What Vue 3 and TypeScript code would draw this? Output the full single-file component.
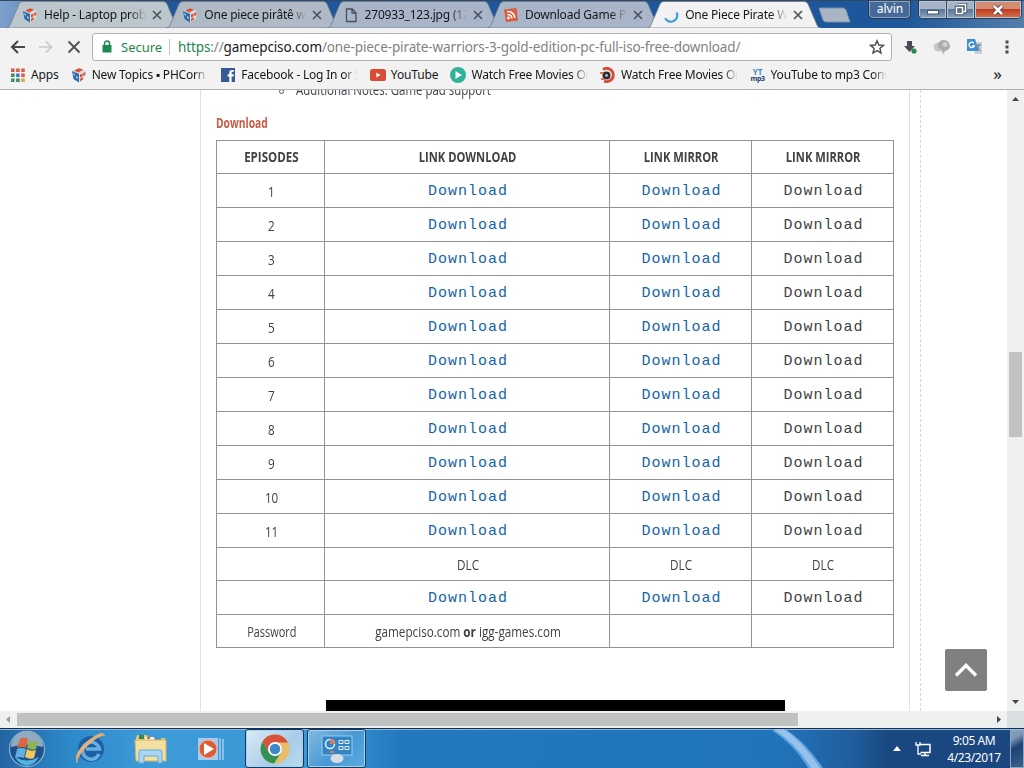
<script setup lang="ts">
interface Tab {
  title: string;
  icon: string;
  tone: string;
  active?: boolean;
}

interface Bookmark {
  label: string;
  icon: string;
  cut?: boolean;
}

interface Row {
  label: string;
  kind: 'link' | 'text' | 'password';
}

const tabs: Tab[] = [
  { title: 'Help - Laptop prob', icon: 'cube', tone: '#bcc6cd' },
  { title: 'One piece pirâtê wa', icon: 'cube', tone: '#b0bac6' },
  { title: '270933_123.jpg (128', icon: 'page', tone: '#a9b5c8' },
  { title: 'Download Game P', icon: 'feed', tone: '#a9b5c8' },
  { title: 'One Piece Pirate W', icon: 'spinner', tone: '#f2f2f2', active: true },
];

const bookmarks: Bookmark[] = [
  { label: 'Apps', icon: 'apps' },
  { label: 'New Topics ▪ PHCorn', icon: 'cube', cut: true },
  { label: 'Facebook - Log In or S', icon: 'facebook', cut: true },
  { label: 'YouTube', icon: 'youtube' },
  { label: 'Watch Free Movies Or', icon: 'play', cut: true },
  { label: 'Watch Free Movies Or', icon: 'reel', cut: true },
  { label: 'YouTube to mp3 Conv', icon: 'ytmp3', cut: true },
];

const rows: Row[] = [
  ...Array.from({ length: 11 }, (_, i): Row => ({ label: String(i + 1), kind: 'link' })),
  { label: '', kind: 'text' },
  { label: '', kind: 'link' },
  { label: 'Password', kind: 'password' },
];
</script>

<template>
  <div class="screen">
    <!-- Shared icon shapes -->
    <svg class="defs" width="0" height="0">
      <symbol id="cube" viewBox="0 0 16 16">
        <path d="M1 4 8 1l7 3-7 3z" fill="#c9d8e4" />
        <path d="M1 4l7 3v8.500l-5.500-3.500z" fill="#2f69a8" />
        <path d="M15 4 8 7v8.500l5.500-3.500z" fill="#d9e4ea" />
        <path d="M3 3.500 8 1.200l4 1.300L7.500 5.500z" fill="#dc4f2a" />
        <path d="M9 7.500l2.500-1v3l-2.500 1zM12.200 6l2.300-1-.3 3-2 1zM9 11.800l3-1.500v2L9 14.500z" fill="#dc4f2a" />
        <path d="M2 6l2 1v2L2.500 8zM5 9l2 1v2l-2-1z" fill="#9cc6e4" />
      </symbol>
      <symbol id="page" viewBox="0 0 16 16">
        <path d="M3.500 2h5.800L13 5.700V14.500H3.500zM9 2v4h4" fill="none" stroke="#4a4f58" stroke-width="1.300" />
      </symbol>
      <symbol id="feed" viewBox="0 0 16 16">
        <path d="M1 2.500 13.500 1 15 13.500 3 15z" fill="#dc5b38" />
        <circle cx="5.500" cy="11" r="1.400" fill="#fff" />
        <path d="M4.500 7.500q4 0 4.500 4M4.200 4.500q7 0 7.600 6.500" fill="none" stroke="#fff" stroke-width="1.500" />
      </symbol>
      <symbol id="spinner" viewBox="0 0 16 16">
        <path d="M13.600 5.500A6.200 6.200 0 0 1 2.200 11.200" fill="none" stroke="#3c9fdc" stroke-width="2.200" />
      </symbol>
      <symbol id="apps" viewBox="0 0 16 16">
        <g fill="none" stroke-width="1.500">
          <path d="M1.800 2.300h2v2h-2zM6.900 2.300h2v2h-2zM12 2.300h2v2h-2z" stroke="#d8553d" />
          <path d="M1.800 7.300h2v2h-2z" stroke="#36875b" />
          <path d="M6.900 7.300h2v2h-2z" stroke="#3a79c0" />
          <path d="M12 7.300h2v2h-2z" stroke="#d8553d" />
          <path d="M1.800 12.300h2v2h-2zM6.900 12.300h2v2h-2z" stroke="#36875b" />
          <path d="M12 12.300h2v2h-2z" stroke="#d3a04e" />
        </g>
      </symbol>
      <symbol id="facebook" viewBox="0 0 16 16">
        <rect x="1" y="1" width="14" height="14" fill="#365a91" />
        <path d="M11.600 15V9.400h2.100V7.200h-2.100V5.800q0-1 1.100-1h1.100V2.900h-1.900Q9.300 2.900 9.300 5.500v1.700H7.600v2.200h1.700V15z" fill="#fff" />
      </symbol>
      <symbol id="youtube" viewBox="0 0 16 16">
        <rect x="0" y="2" width="16" height="12" rx="2.600" fill="#d64c35" />
        <path d="M6.300 5.500v5L10.600 8z" fill="#fff" />
      </symbol>
      <symbol id="play" viewBox="0 0 16 16">
        <circle cx="8" cy="8" r="8" fill="#2fb296" />
        <path d="M5.500 4v8l6.300-4z" fill="#fff" />
      </symbol>
      <symbol id="reel" viewBox="0 0 16 16">
        <path d="M3 2.500A6.600 6.600 0 1 1 4 14" fill="none" stroke="#d64c35" stroke-width="2.800" />
        <circle cx="6.500" cy="8.500" r="4" fill="#2e2c32" />
        <circle cx="6.500" cy="8.500" r="1.400" fill="#b9c0c8" />
        <path d="M0 6h4M1 12h4" stroke="#d64c35" stroke-width="1.500" />
      </symbol>
      <symbol id="close" viewBox="0 0 10 10">
        <path d="M1 1l8 8M9 1 1 9" stroke="#4f545c" stroke-width="1.700" />
      </symbol>
    </svg>

    <header class="tab-strip">
      <div v-for="(tab, i) in tabs" :key="i" class="tab" :class="{ active: tab.active }">
        <svg class="tab-shape" viewBox="0 0 174 28" width="174" height="28">
          <path d="M0 28Q3 28 4 25L13 4Q14 1.500 17 1.500H157Q160 1.500 161 4L170 25Q171 28 174 28Z" :fill="tab.tone" stroke="#6f7c91" stroke-width=".8" />
        </svg>
        <svg class="icon"><use :href="'#' + tab.icon" /></svg>
        <span class="tab-title">{{ tab.title }}</span>
        <svg class="tab-close"><use href="#close" /></svg>
      </div>
      <svg class="new-tab" width="34" height="16" viewBox="0 0 34 16">
        <path d="M1 1h24q2 0 3 2l4 12H8q-2 0-3-2z" fill="#a9b5c4" stroke="#7c91ad" />
      </svg>
      <div class="user-button">alvin</div>
      <div class="window-buttons">
        <span class="win"><svg width="14" height="12" viewBox="0 0 14 12"><rect x="1.500" y="6.500" width="11" height="3.500" fill="#fff" stroke="#46566e" /></svg></span>
        <span class="win"><svg width="14" height="13" viewBox="0 0 14 13"><path d="M4.500 1.500h7v7h-2M2.500 4.500h6v6h-6z" fill="none" stroke="#46566e" stroke-width="3.400" /><path d="M4.500 1.500h7v7h-2M2.500 4.500h6v6h-6z" fill="none" stroke="#fff" stroke-width="1.500" /></svg></span>
        <span class="win win-close"><svg width="14" height="12" viewBox="0 0 14 12"><path d="M3 2l8 8M11 2l-8 8" stroke="#5b3534" stroke-width="4.400" /><path d="M3 2l8 8M11 2l-8 8" stroke="#fff" stroke-width="2.600" /></svg></span>
      </div>
    </header>

    <nav class="toolbar">
      <div class="nav-buttons">
        <svg width="16" height="16" viewBox="0 0 16 16"><path d="M15 8H2.500M8 2 2 8l6 6" fill="none" stroke="#42464d" stroke-width="2" /></svg>
        <svg width="16" height="16" viewBox="0 0 16 16"><path d="M1 8h12.500M8 2.500 13.500 8 8 13.500" fill="none" stroke="#c6c8ca" stroke-width="1.700" /></svg>
        <svg width="16" height="16" viewBox="0 0 16 16"><path d="M2.500 2.500l11 11M13.500 2.500l-11 11" stroke="#4b4e54" stroke-width="1.800" /></svg>
      </div>
      <div class="omnibox">
        <svg class="lock" width="10" height="13" viewBox="0 0 10 13"><path d="M2.500 6V3.500a2.500 2.500 0 0 1 5 0V6" fill="none" stroke="#1f8750" stroke-width="1.500" /><rect x=".5" y="5" width="9" height="7.500" fill="#1f8750" /></svg>
        <span class="secure">Secure</span>
        <span class="divider"></span>
        <span class="url"><span class="https">https</span>://<span class="host">gamepciso.com</span>/one-piece-pirate-warriors-3-gold-edition-pc-full-iso-free-download/</span>
        <svg class="star" width="16" height="16" viewBox="0 0 16 16"><path d="M8 1.700l1.800 4.300 4.600.4-3.500 3 1.100 4.600L8 11.600 4 14l1.100-4.600-3.500-3 4.600-.4z" fill="none" stroke="#484b50" stroke-width="1.400" /></svg>
      </div>
      <div class="extensions">
        <svg width="16" height="16" viewBox="0 0 16 16"><path d="M5 2h5v5h3l-5.500 6L2 7h3z" fill="#484c52" /><circle cx="12" cy="12" r="2.600" fill="#208a4b" /></svg>
        <svg width="18" height="16" viewBox="0 0 18 16"><ellipse cx="6" cy="8" rx="5.500" ry="4.500" fill="#c6c8c8" /><path d="M5 6q1-5 6-5t6 6q0 4-5 5l-2 3.500-1-4.500q-4-1-4-5z" fill="#aaacad" /><circle cx="12" cy="5.500" r="2.500" fill="#d0d2d2" /></svg>
        <svg width="17" height="17" viewBox="0 0 17 17"><path d="M6 4h10v12H9z" fill="#cbd0d5" /><path d="M1 1h8l4 12H1z" fill="#408fd4" /><path d="M8 5.300A2.700 2.700 0 1 0 8.300 8H6" fill="none" stroke="#fff" stroke-width="1.300" /><path d="M11 7h4M13 6v1q0 3-3 5M11 9l4 4" fill="none" stroke="#71808d" /></svg>
        <svg class="menu" width="6" height="16" viewBox="0 0 6 16"><path d="M1.500 1.500h3v3h-3zM1.500 6.500h3v3h-3zM1.500 11.500h3v3h-3z" fill="#45484e" /></svg>
      </div>
    </nav>

    <div class="bookmarks">
      <div v-for="(mark, i) in bookmarks" :key="i" class="bookmark">
        <span v-if="mark.icon === 'ytmp3'" class="ytmp3"><b>YT</b><i>mp3</i></span>
        <svg v-else class="icon"><use :href="'#' + mark.icon" /></svg>
        <span class="mark-label" :class="{ cut: mark.cut }">{{ mark.label }}</span>
      </div>
      <span class="more">»</span>
    </div>

    <div class="viewport">
      <div class="page">
        <main class="article">
          <div class="note"><span class="ring"></span><span class="note-text">Additional Notes: Game pad support</span></div>
          <h4><span class="narrow">Download</span></h4>
          <table>
            <colgroup>
              <col class="col-episode" />
              <col class="col-download" />
              <col class="col-mirror" />
              <col class="col-mirror" />
            </colgroup>
            <thead>
              <tr class="short">
                <th><span class="narrow episodes">EPISODES</span></th>
                <th><span class="narrow">LINK DOWNLOAD</span></th>
                <th><span class="narrow">LINK MIRROR</span></th>
                <th><span class="narrow">LINK MIRROR</span></th>
              </tr>
            </thead>
            <tbody>
              <tr v-for="(row, i) in rows" :key="i" :class="{ short: row.kind !== 'link' }">
                <td><span class="narrow" :class="{ password: row.kind === 'password' }">{{ row.label }}</span></td>
                <template v-if="row.kind === 'link'">
                  <td><a>Download</a></td>
                  <td><a>Download</a></td>
                  <td><span class="plain">Download</span></td>
                </template>
                <template v-else-if="row.kind === 'text'">
                  <td v-for="n in 3" :key="n"><span class="narrow">DLC</span></td>
                </template>
                <template v-else>
                  <td><span class="narrow">gamepciso.com <b>or</b> igg-games.com</span></td>
                  <td></td>
                  <td></td>
                </template>
              </tr>
            </tbody>
          </table>
          <div class="video"></div>
        </main>
        <aside class="side">
          <div class="to-top">
            <svg width="24" height="16" viewBox="0 0 24 16"><path d="M2 13.500 12 3.500l10 10" fill="none" stroke="#fff" stroke-width="3.400" /></svg>
          </div>
        </aside>
      </div>
      <div class="v-scroll">
        <svg width="7" height="4" viewBox="0 0 7 4"><path d="M0 4 3.500 0 7 4z" fill="#45484c" /></svg>
        <div class="v-thumb"></div>
        <svg width="7" height="4" viewBox="0 0 7 4"><path d="M0 0h7L3.500 4z" fill="#45484c" /></svg>
      </div>
    </div>
    <div class="h-scroll">
      <svg class="arrow-left" width="4" height="7" viewBox="0 0 4 7"><path d="M4 0v7L0 3.500z" fill="#999c9e" /></svg>
      <div class="h-thumb"></div>
      <svg class="arrow-right" width="4" height="7" viewBox="0 0 4 7"><path d="M0 0v7l4-3.500z" fill="#45484c" /></svg>
      <div class="corner"></div>
    </div>

    <footer class="taskbar">
      <svg class="swoosh" width="100" height="39" viewBox="0 0 100 39"><path d="M18 0Q42 15 56 39H71Q53 12 33 0z" fill="#5fa3dd" /><path d="M21 0Q45 15 59 39H68Q50 12 32 0z" fill="#95c1ea" /></svg>
      <div class="start">
        <svg width="38" height="38" viewBox="0 0 38 38">
          <circle cx="19" cy="19" r="17.500" fill="#1f5288" stroke="#7fb0d5" stroke-width="1.300" />
          <path d="M3 17A16 16 0 0 1 35 17Q19 12 3 17z" fill="#91aabf" />
          <path d="M7 27q12 7 24 0-4 8-12 8.500Q11 35 7 27z" fill="#4fb4e4" />
          <path d="M12 9q4-3 8 0l-2 9q-4-2-9 0z" fill="#dc6642" />
          <path d="M21 10q4 3 9 1l-2 8q-4 2-9-1z" fill="#8fb354" />
          <path d="M9 19q4-2 9 0l-2 9q-4-2-9 0z" fill="#63afdf" />
          <path d="M19 19q4 3 9 1l-2 8q-4 2-9-1z" fill="#edc85c" />
        </svg>
      </div>
      <div class="task">
        <svg width="34" height="34" viewBox="0 0 34 34">
          <circle cx="17" cy="17" r="13" fill="#1c5fa5" />
          <path d="M25 22A8.500 8.500 0 1 1 25.500 17H12" fill="none" stroke="#67aee2" stroke-width="3.400" />
          <path d="M3 31Q-1 21 14 9T31 4Q28 2 20 8T7 21 3 31z" fill="#e6b483" stroke="#d7a574" />
        </svg>
      </div>
      <div class="task">
        <svg width="34" height="34" viewBox="0 0 34 34">
          <path d="M2 6l1-3h10l2 3h16v22H2z" fill="#e1c778" />
          <path d="M5 3h5v4H5z" fill="#368554" /><path d="M11 5h9v4h-9z" fill="#f5f2dc" /><path d="M21 6h6v3h-6z" fill="#4d8bc5" /><path d="M13 5h3v2h-3z" fill="#d9694a" />
          <path d="M1 8h31v21H2z" fill="#f3dfa0" stroke="#d6b467" />
          <path d="M5 31V20q0-2 2-2h19q2 0 2 2v11h-4v-7H10v7z" fill="#a9d6f2" stroke="#5caade" />
        </svg>
      </div>
      <div class="task">
        <svg width="30" height="30" viewBox="0 0 30 30">
          <rect x="2" y="4" width="20" height="22" fill="#a6cbed" /><path d="M24 4v22M27 5v21" stroke="#a6cbed" stroke-width="1.500" />
          <circle cx="12" cy="15" r="9" fill="#dc5b38" stroke="#f0b197" /><path d="M8 9v12l10-6z" fill="#fff" />
        </svg>
      </div>
      <div class="task window current">
        <svg width="30" height="30" viewBox="0 0 30 30">
          <circle cx="15" cy="15" r="14.500" fill="#e8bd68" />
          <path d="M2.500 7.700A14.500 14.500 0 0 1 28 8.500H15L9 18.500z" fill="#d7523b" />
          <path d="M2.500 7.700A14.500 14.500 0 0 0 14 29.500L21 18.500 9 18.500z" fill="#329153" />
          <circle cx="15" cy="15" r="7" fill="#fff" /><circle cx="15" cy="15" r="5.300" fill="#4087c9" />
        </svg>
      </div>
      <div class="task window">
        <svg width="34" height="30" viewBox="0 0 34 30">
          <rect x="2" y="2" width="30" height="19" fill="#3483c5" stroke="#9acdf0" />
          <circle cx="10" cy="10" r="4.500" fill="none" stroke="#e5f2fa" stroke-width="1.500" /><path d="M10 10V5a5 5 0 0 1 5 5z" fill="#e07a4e" />
          <path d="M19 6.500h4v3h-4zM25 6.500h4v3h-4zM19 12.500h4v3h-4zM25 12.500h4v3h-4z" fill="none" stroke="#e5f2fa" />
          <path d="M10 18h4" stroke="#e07a4e" stroke-width="2" /><ellipse cx="17" cy="24.500" rx="6.500" ry="4.500" fill="#d8dde1" />
        </svg>
      </div>
      <div class="tray">
        <svg width="8" height="5" viewBox="0 0 8 5"><path d="M0 5 4 0l4 5z" fill="#fff" /></svg>
        <svg width="16" height="16" viewBox="0 0 16 16"><path d="M5 3.500h10v8H5.500M10 12v2M6 14.500h8" fill="none" stroke="#fff" stroke-width="1.500" /><path d="M1 1v3h4V1M3 4v9h3" fill="none" stroke="#fff" stroke-width="1.300" /></svg>
        <div class="clock"><span>9:05 AM</span><span>4/23/2017</span></div>
        <div class="show-desktop"></div>
      </div>
    </footer>
  </div>
</template>

<style>
body {
  margin: 0;
  overflow: hidden;
}
</style>

<style scoped>
.screen {
  width: 1024px;
  height: 768px;
  display: flex;
  flex-direction: column;
  overflow: hidden;
  background: #fff;
  color: #15171a;
  font-family: "Noto Sans", "Open Sans", sans-serif;
  font-size: 12px;
}

.defs {
  position: absolute;
}

.icon {
  width: 16px;
  height: 16px;
  flex: none;
}

/* Tabs */
.tab-strip {
  height: 28px;
  flex: none;
  display: flex;
  box-sizing: border-box;
  padding-left: 6px;
  background: linear-gradient(90deg, #7c9fcb 0, #20569a 170px, #1d569a 900px, #547fac 1024px);
  border-top: 1px solid #33475f;
}

.tab {
  position: relative;
  z-index: 1;
  display: flex;
  align-items: center;
  box-sizing: border-box;
  width: 160.3px;
  flex: none;
  padding-left: 16px;
}

.tab.active {
  z-index: 2;
}

.tab-shape {
  position: absolute;
  left: 0;
  top: -1px;
}

.tab .icon,
.tab-title,
.tab-close {
  position: relative;
}

.tab-title {
  width: 102px;
  margin-left: 6px;
  overflow: hidden;
  white-space: nowrap;
  letter-spacing: -0.2px;
  -webkit-mask-image: linear-gradient(90deg, #000 84%, transparent);
  mask-image: linear-gradient(90deg, #000 84%, transparent);
}

.tab-close {
  width: 10px;
  height: 10px;
  margin-left: 6px;
}

.new-tab {
  margin: 6px 0 0 11px;
}

.user-button {
  box-sizing: border-box;
  width: 43px;
  height: 18px;
  margin-left: 16px;
  border: 1px solid #26384f;
  border-top: 0;
  border-radius: 0 0 5px 5px;
  box-shadow: inset 0 0 0 1px #8ca3bf;
  background: #456a98;
  color: #fff;
  line-height: 15px;
  text-align: center;
}

.window-buttons {
  display: flex;
  height: 18px;
  margin-left: 7px;
  box-sizing: border-box;
  border: 1px solid #2c3e56;
  border-top: 0;
  border-radius: 0 0 5px 5px;
  overflow: hidden;
}

.win {
  width: 27px;
  display: flex;
  align-items: center;
  justify-content: center;
  border-right: 1px solid #34465c;
  background: linear-gradient(#a5b4c6 45%, #5c7899 50%, #8ba3bb);
  box-shadow: inset 0 0 0 1px #b7c4d2;
}

.win-close {
  width: 46px;
  border: 0;
  background: linear-gradient(#d38b72 45%, #bd3c20 50%, #d7754b);
}

/* Toolbar */
.toolbar {
  display: flex;
  align-items: center;
  height: 34px;
  padding-top: 3px;
  box-sizing: border-box;
  flex: none;
  background: #f2f2f2;
}

.nav-buttons {
  display: flex;
  gap: 12px;
  padding-left: 10px;
  width: 82px;
}

.omnibox {
  display: flex;
  align-items: center;
  box-sizing: border-box;
  width: 800px;
  height: 28px;
  border: 1px solid #b0b0bb;
  border-radius: 3px;
  background: #fff;
  font-size: 13.500px;
}

.lock {
  margin-left: 9px;
}

.secure {
  width: 48px;
  margin-left: 9px;
  color: #23864f;
  font-size: 13px;
}

.divider {
  width: 1px;
  height: 16px;
  background: #c3c5c8;
}

.url {
  width: 683px;
  margin-left: 8px;
  color: #808386;
  white-space: nowrap;
  letter-spacing: -0.12px;
}

.https {
  color: #23864f;
}

.host {
  color: #17191b;
}

.star {
  margin-left: 8px;
}

.extensions {
  display: flex;
  align-items: center;
  gap: 15px;
  padding-left: 10px;
}

.menu {
  margin-left: 6px;
}

.bookmarks {
  display: flex;
  align-items: center;
  gap: 12.100px;
  box-sizing: border-box;
  height: 28px;
  flex: none;
  padding: 0 0 2px 10px;
  background: #f2f2f2;
  border-bottom: 1px solid #b1b1bc;
}

.bookmark {
  display: flex;
  align-items: center;
  gap: 5px;
}

.mark-label {
  white-space: nowrap;
  letter-spacing: -0.15px;
}

.mark-label.cut {
  width: 116.500px;
  overflow: hidden;
  letter-spacing: -0.2px;
  -webkit-mask-image: linear-gradient(90deg, #000 88%, transparent);
  mask-image: linear-gradient(90deg, #000 88%, transparent);
}

.ytmp3 {
  width: 16px;
  display: flex;
  flex-direction: column;
  align-items: center;
  font-size: 8px;
  line-height: 7px;
  color: #3f8fc6;
}

.ytmp3 i {
  font-style: normal;
  font-weight: bold;
  font-size: 7px;
  letter-spacing: -0.3px;
  color: #1d416e;
}

.more {
  margin: -3px 0 0 auto;
  padding-right: 22px;
  font-size: 17px;
}

/* Page */
.viewport {
  display: flex;
  height: 621px;
  flex: none;
}

.page {
  display: flex;
  width: 1007px;
  overflow: hidden;
}

.article {
  box-sizing: border-box;
  width: 710px;
  height: 621px;
  margin-left: 200px;
  padding-left: 15px;
  border: solid #dfe1e2;
  border-width: 0 1px;
  overflow: hidden;
  color: #3f4144;
  font-family: "Open Sans", "Noto Sans", sans-serif;
  font-size: 15px;
}

.note {
  display: flex;
  height: 22px;
  padding-left: 63px;
  font-size: 14px;
}

.ring {
  box-sizing: border-box;
  width: 5px;
  height: 5px;
  margin-top: -1px;
  border: 1px solid #55585c;
  border-radius: 50%;
}

.note-text {
  margin: -10px 0 0 12px;
  height: 20px;
  line-height: 20px;
  white-space: nowrap;
  transform: scaleX(0.818);
  transform-origin: left;
}

h4 {
  height: 28px;
  margin: 0;
  line-height: 20px;
  font-size: 15px;
  color: #c85a46;
}

.narrow {
  display: inline-block;
  transform: scaleX(0.78);
  white-space: nowrap;
}

.narrow.password {
  transform: scaleX(0.73);
}

h4 .narrow {
  transform: scaleX(0.685);
  transform-origin: left;
}

th .narrow {
  transform: scaleX(0.745);
}

th .narrow.episodes {
  transform: scaleX(0.77);
}

table {
  width: 678px;
  table-layout: fixed;
  border-collapse: collapse;
}

.col-episode {
  width: 108px;
}

.col-download {
  width: 285px;
}

.col-mirror {
  width: 142px;
}

tr {
  height: 34px;
}

tr.short {
  height: 33px;
}

th,
td {
  padding: 0 0 0 2px;
  border: 1px solid #929292;
  text-align: center;
  vertical-align: middle;
  line-height: 20px;
}

th {
  padding-bottom: 2px;
}

a,
.plain {
  display: block;
  padding-top: 3px;
  font-family: "Liberation Mono", "Courier New", monospace;
  font-size: 15px;
  letter-spacing: 1px;
}

a {
  color: #1565a5;
}

.video {
  width: 459px;
  height: 11px;
  margin: 52px 0 0 110px;
  background: #000;
}

.side {
  display: flex;
  align-items: flex-end;
  box-sizing: border-box;
  width: 87px;
  margin-left: 10px;
  padding: 0 0 20px 24px;
  border-left: 1px dashed #d6d8da;
}

.to-top {
  display: flex;
  align-items: center;
  justify-content: center;
  width: 42px;
  height: 42px;
  border-radius: 2px;
  background: #808080;
}

.v-scroll {
  display: flex;
  flex-direction: column;
  align-items: center;
  justify-content: space-between;
  box-sizing: border-box;
  width: 17px;
  padding: 7px 0;
  background: #eff0f0;
}

.v-thumb {
  width: 13px;
  height: 85px;
  margin-top: -12px;
  background: #c1c2c2;
}

.h-scroll {
  display: flex;
  align-items: center;
  height: 17px;
  flex: none;
  background: #eff0f0;
}

.arrow-left {
  margin-left: 6px;
}

.h-thumb {
  width: 781px;
  height: 13px;
  margin-left: 7px;
  background: #c0c1c1;
}

.arrow-right {
  margin-left: auto;
  margin-right: 6px;
}

.corner {
  width: 17px;
  height: 17px;
  background: #d9dfe0;
}

/* Taskbar */
.taskbar {
  position: relative;
  display: flex;
  align-items: center;
  box-sizing: border-box;
  height: 40px;
  flex: none;
  border-top: 1px solid #142f50;
  box-shadow: inset 0 1px 0 #8db9df;
  background: linear-gradient(90deg, #2564a2 0, #2e8bcb 75px, #3d9bd7 150px, #3997d5 330px, #2379bd 400px, #2174ba 780px, #205f9f 850px, #1a477f 890px, #1a477f 1024px);
}

.swoosh {
  position: absolute;
  left: 752px;
  top: 0;
}

.start {
  padding-left: 8px;
  width: 53px;
  height: 38px;
}

.task {
  display: flex;
  align-items: center;
  justify-content: center;
  width: 60px;
}

.task.window {
  box-sizing: border-box;
  width: 59px;
  height: 39px;
  border: 1px solid #123a60;
  border-radius: 3px;
  box-shadow: inset 0 0 0 1px #a7d1ed;
  background: linear-gradient(135deg, #81bae2, #4699d3 55%, #5daae0);
}

.task.current {
  margin: 0 3px 0 4px;
  background: linear-gradient(135deg, #dceaf3, #a8cde9 60%, #b9dbee);
}

.tray {
  position: relative;
  display: flex;
  align-items: center;
  height: 39px;
  margin-left: auto;
  color: #fff;
}

.tray svg + svg {
  margin-left: 14px;
}

.clock {
  display: flex;
  flex-direction: column;
  align-items: center;
  width: 54px;
  margin: 0 9px 0 16px;
  line-height: 17px;
  font-size: 12px;
  letter-spacing: -0.4px;
}

.show-desktop {
  box-sizing: border-box;
  width: 14px;
  height: 38px;
  border: 1px solid #8da5bf;
  background: linear-gradient(150deg, #7f9ab5 20%, #1b4271 45%, #3a628f);
}
</style>
